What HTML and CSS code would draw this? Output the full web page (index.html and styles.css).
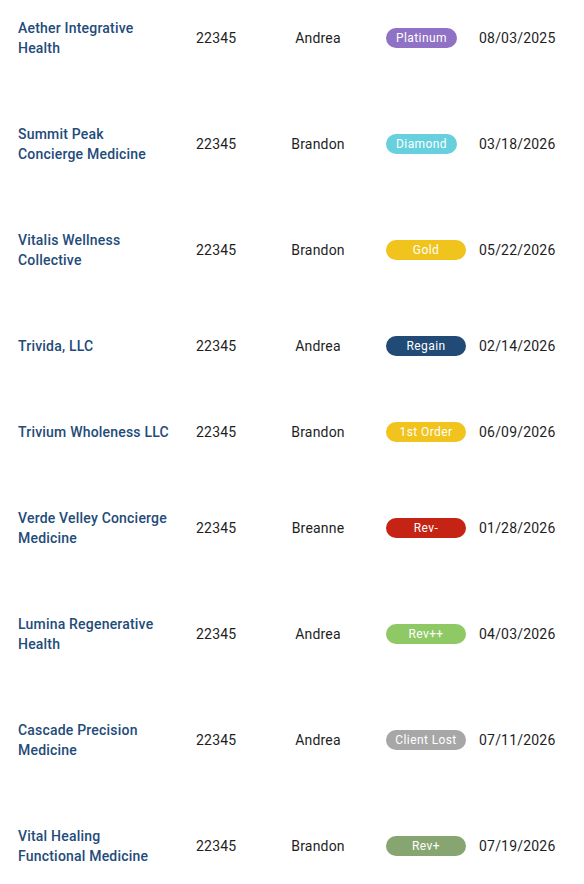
FILE: index.html
```html
<!DOCTYPE html>
<html lang="en">
<head>
<meta charset="utf-8">
<title>Clients</title>
<link rel="stylesheet" href="styles.css">
</head>
<body>
<div class="list">
  <div class="row">
    <div class="name">Aether Integrative Health</div>
    <div class="id">22345</div>
    <div class="agent">Andrea</div>
    <div class="status"><span class="badge badge--narrow badge--platinum">Platinum</span></div>
    <div class="date">08/03/2025</div>
  </div>
  <div class="row">
    <div class="name">Summit Peak Concierge Medicine</div>
    <div class="id">22345</div>
    <div class="agent">Brandon</div>
    <div class="status"><span class="badge badge--narrow badge--diamond">Diamond</span></div>
    <div class="date">03/18/2026</div>
  </div>
  <div class="row">
    <div class="name">Vitalis Wellness Collective</div>
    <div class="id">22345</div>
    <div class="agent">Brandon</div>
    <div class="status"><span class="badge badge--gold">Gold</span></div>
    <div class="date">05/22/2026</div>
  </div>
  <div class="row">
    <div class="name">Trivida, LLC</div>
    <div class="id">22345</div>
    <div class="agent">Andrea</div>
    <div class="status"><span class="badge badge--regain">Regain</span></div>
    <div class="date">02/14/2026</div>
  </div>
  <div class="row">
    <div class="name">Trivium Wholeness LLC</div>
    <div class="id">22345</div>
    <div class="agent">Brandon</div>
    <div class="status"><span class="badge badge--gold">1st Order</span></div>
    <div class="date">06/09/2026</div>
  </div>
  <div class="row">
    <div class="name">Verde Velley Concierge Medicine</div>
    <div class="id">22345</div>
    <div class="agent">Breanne</div>
    <div class="status"><span class="badge badge--revminus">Rev-</span></div>
    <div class="date">01/28/2026</div>
  </div>
  <div class="row">
    <div class="name">Lumina Regenerative Health</div>
    <div class="id">22345</div>
    <div class="agent">Andrea</div>
    <div class="status"><span class="badge badge--revplusplus">Rev++</span></div>
    <div class="date">04/03/2026</div>
  </div>
  <div class="row">
    <div class="name">Cascade Precision Medicine</div>
    <div class="id">22345</div>
    <div class="agent">Andrea</div>
    <div class="status"><span class="badge badge--lost">Client Lost</span></div>
    <div class="date">07/11/2026</div>
  </div>
  <div class="row">
    <div class="name">Vital Healing Functional Medicine</div>
    <div class="id">22345</div>
    <div class="agent">Brandon</div>
    <div class="status"><span class="badge badge--revplus">Rev+</span></div>
    <div class="date">07/19/2026</div>
  </div>
</div>
</body>
</html>
```

FILE: styles.css
```css
* { box-sizing: border-box; }

html, body {
  margin: 0;
  padding: 0;
  background: #ffffff;
}

body {
  font-family: Roboto, "Liberation Sans", Arial, sans-serif;
  font-size: 14px;
  line-height: 20px;
  letter-spacing: 0.2px;
  color: #1e1e1e;
}

.list {
  display: flex;
  flex-direction: column;
  gap: 66px;
  padding: 18px 0 0 18px;
}

.row {
  display: grid;
  grid-template-columns: 178px 70px 104px 109px 1fr;
  align-items: center;
}

.name {
  padding-right: 26px;
  font-weight: 500;
  color: #234b79;
}

.agent {
  text-align: center;
}

.status {
  padding-left: 16px;
  display: flex;
}

.badge {
  display: inline-block;
  width: 80px;
  height: 20px;
  border-radius: 10px;
  font-size: 12px;
  line-height: 20px;
  text-align: center;
  color: #ffffff;
  letter-spacing: 0.4px;
}

.badge--narrow { width: 71px; }

.badge--platinum { background: #8f72c5; }
.badge--diamond { background: #66d0de; }
.badge--gold { background: #f1c31d; }
.badge--regain { background: #214a77; }
.badge--revminus { background: #c52314; }
.badge--revplusplus { background: #8ec966; }
.badge--lost { background: #a7a7a7; }
.badge--revplus { background: #86a571; }
```
